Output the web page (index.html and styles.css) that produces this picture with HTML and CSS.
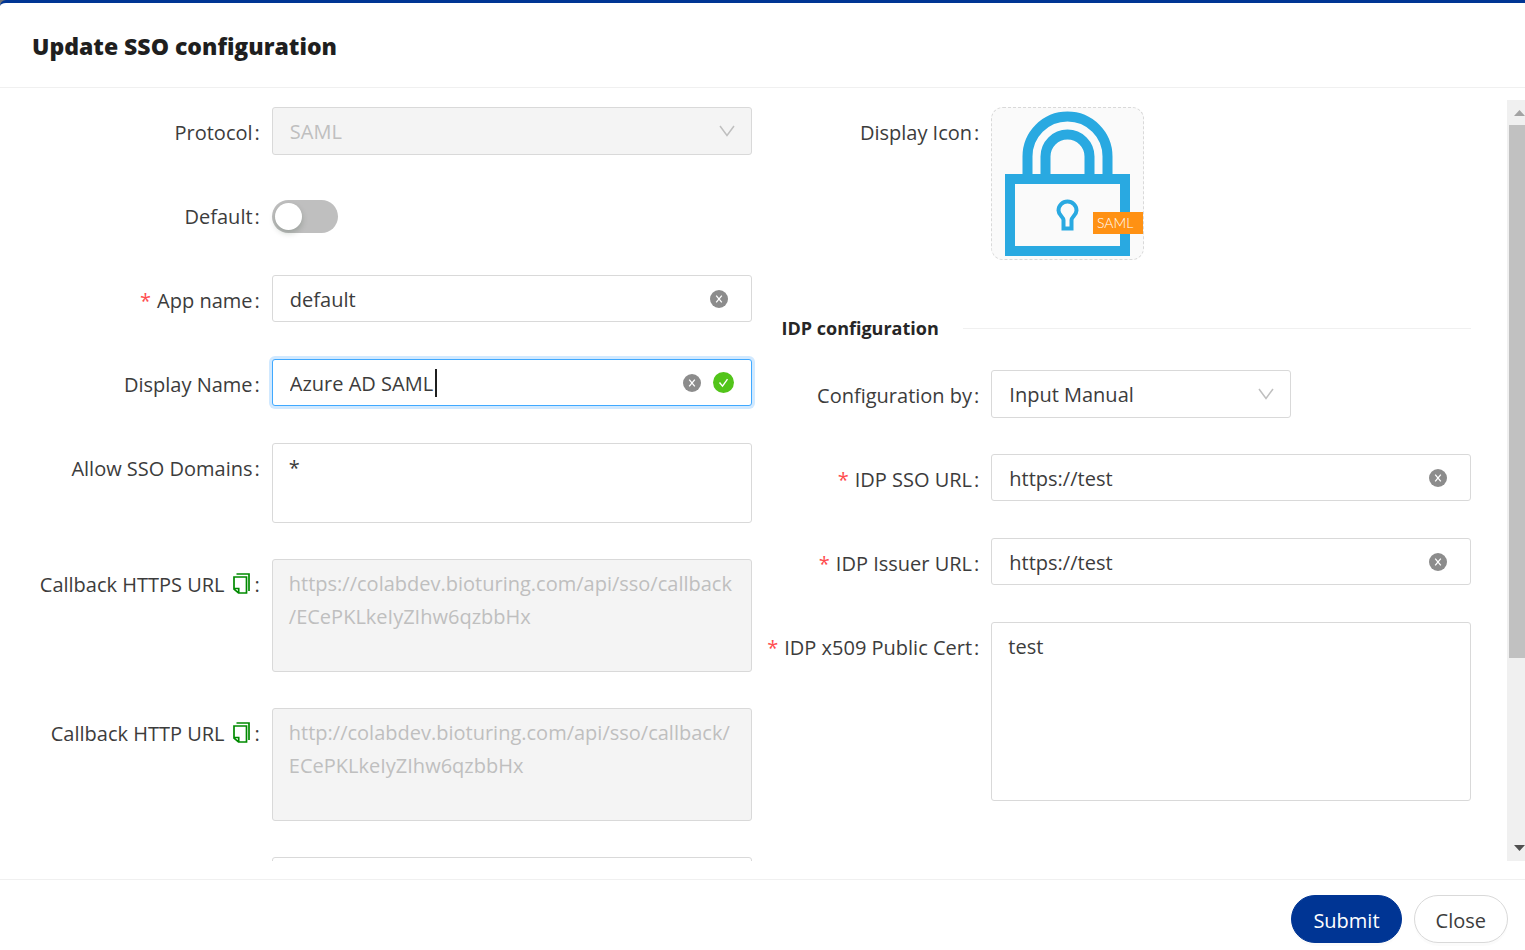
FILE: index.html
```html
<!DOCTYPE html>
<html lang="en">
<head>
<meta charset="utf-8">
<title>Update SSO configuration</title>
<link rel="stylesheet" href="styles.css">
</head>
<body>
<svg class="defs" aria-hidden="true">
  <symbol id="clear" viewBox="0 0 18 18"><circle cx="9" cy="9" r="9" fill="#8c8c8c"/><path d="M6.2 5.6l5.6 6.8M11.8 5.6l-5.6 6.8" stroke="#fff" stroke-width="1.3" fill="none"/></symbol>
  <symbol id="chevron" viewBox="0 0 16 12"><path d="M1 1l7 9.500 7-9.500" stroke="#bfbfbf" stroke-width="1.500" fill="none"/></symbol>
  <symbol id="copy" viewBox="0 0 18 22"><path d="M3.500 1H16v17M1 4h12.500v16H5.500L1 16.200zM1 15.500h4.700V20" stroke="#008a00" stroke-width="1.700" fill="none"/></symbol>
</svg>
<main class="modal">
  <header class="modal-header"><h1 class="title">Update SSO configuration</h1></header>
  <div class="modal-body">
    <form class="form" id="sso">
      <div class="column">
        <div class="row">
          <label class="label" for="protocol">Protocol<span class="colon">:</span></label>
          <div class="control">
            <select class="field select" id="protocol" disabled><option>SAML</option></select>
            <svg class="chevron"><use href="#chevron"/></svg>
          </div>
        </div>
        <div class="row">
          <label class="label" for="default">Default<span class="colon">:</span></label>
          <div class="control switch-box"><input class="switch" type="checkbox" role="switch" id="default"></div>
        </div>
        <div class="row">
          <label class="label" for="app"><span class="required">*</span>App name<span class="colon">:</span></label>
          <div class="control">
            <input class="field" id="app" type="text" value="default">
            <div class="suffix"><button class="icon-button" type="button" aria-label="Clear"><svg class="clear"><use href="#clear"/></svg></button></div>
          </div>
        </div>
        <div class="row">
          <label class="label" for="display">Display Name<span class="colon">:</span></label>
          <div class="control">
            <input class="field focused" id="display" type="text" value="Azure AD SAML">
            <span class="caret"></span>
            <div class="suffix suffix-valid">
              <button class="icon-button" type="button" aria-label="Clear"><svg class="clear"><use href="#clear"/></svg></button>
              <svg class="valid" viewBox="0 0 21 21"><circle cx="10.500" cy="10.500" r="10.500" fill="#52c41a"/><path d="M6.500 10.500l3 3.700 5-7" stroke="#fff" stroke-width="1.400" fill="none"/></svg>
            </div>
          </div>
        </div>
        <div class="row">
          <label class="label" for="domains">Allow SSO Domains<span class="colon">:</span></label>
          <div class="control"><textarea class="field area area-small" id="domains">*</textarea></div>
        </div>
        <div class="row">
          <div class="label"><label for="https">Callback HTTPS URL</label><button class="icon-button copy-button" type="button" aria-label="Copy"><svg class="copy"><use href="#copy"/></svg></button><span class="colon">:</span></div>
          <div class="control"><textarea class="field area area-medium" id="https" disabled>https://colabdev.bioturing.com/api/sso/callback
/ECePKLkeIyZIhw6qzbbHx</textarea></div>
        </div>
        <div class="row">
          <div class="label"><label for="http">Callback HTTP URL</label><button class="icon-button copy-button" type="button" aria-label="Copy"><svg class="copy"><use href="#copy"/></svg></button><span class="colon">:</span></div>
          <div class="control"><textarea class="field area area-medium" id="http" disabled>http://colabdev.bioturing.com/api/sso/callback/
ECePKLkeIyZIhw6qzbbHx</textarea></div>
        </div>
        <div class="row">
          <div class="label"></div>
          <div class="control"><textarea class="field area area-small" aria-label="Notes"></textarea></div>
        </div>
      </div>
      <div class="column">
        <div class="row">
          <div class="label">Display Icon<span class="colon">:</span></div>
          <div class="control">
            <button class="upload" type="button" aria-label="Display Icon">
              <svg class="lock" viewBox="0 0 151 151">
                <g fill="none" stroke="#29a9e1" stroke-width="10">
                  <path d="M35.500 68V48.500a40 40 0 0 1 80 0V68M53.500 68V48.500a22 22 0 0 1 44 0V68"/>
                  <path d="M18 71h115v72H18z"/>
                  <path d="M71.500 120.500v-8.500c0-3-5-5-5-9.500a9 9 0 0 1 18 0c0 4.500-5 6.500-5 9.500v8.500z" stroke-width="4"/>
                </g>
                <path d="M101 104h50v22h-50z" fill="#ff9113"/>
                <text class="lock-text" x="105" y="120">SAML</text>
              </svg>
            </button>
          </div>
        </div>
        <h2 class="divider">IDP configuration</h2>
        <div class="row">
          <label class="label" for="by">Configuration by<span class="colon">:</span></label>
          <div class="control control-short">
            <select class="field select" id="by"><option>Input Manual</option></select>
            <svg class="chevron"><use href="#chevron"/></svg>
          </div>
        </div>
        <div class="row">
          <label class="label" for="url"><span class="required">*</span>IDP SSO URL<span class="colon">:</span></label>
          <div class="control">
            <input class="field" id="url" type="text" value="https://test">
            <div class="suffix"><button class="icon-button" type="button" aria-label="Clear"><svg class="clear"><use href="#clear"/></svg></button></div>
          </div>
        </div>
        <div class="row">
          <label class="label" for="issuer"><span class="required">*</span>IDP Issuer URL<span class="colon">:</span></label>
          <div class="control">
            <input class="field" id="issuer" type="text" value="https://test">
            <div class="suffix"><button class="icon-button" type="button" aria-label="Clear"><svg class="clear"><use href="#clear"/></svg></button></div>
          </div>
        </div>
        <div class="row">
          <label class="label" for="cert"><span class="required">*</span>IDP x509 Public Cert<span class="colon">:</span></label>
          <div class="control"><textarea class="field area area-large" id="cert">test</textarea></div>
        </div>
      </div>
    </form>
    <div class="scrollbar" aria-hidden="true">
      <svg class="arrow" viewBox="0 0 25 25"><path d="M7 16l5.500-6 5.500 6z" fill="#a3a3a3"/></svg>
      <div class="track"><div class="thumb"></div></div>
      <svg class="arrow" viewBox="0 0 25 25"><path d="M7 9h11l-5.500 6z" fill="#505050"/></svg>
    </div>
  </div>
  <footer class="modal-footer">
    <button class="button primary" type="submit" form="sso">Submit</button>
    <button class="button" type="button">Close</button>
  </footer>
</main>
</body>
</html>
```
FILE: styles.css
```css
* { box-sizing: border-box; }
body { margin: 0; background: #6f7276; color: #3c3c3c; font: 400 20px/33px "Open Sans", "Noto Sans", sans-serif; }
.defs { position: absolute; width: 0; height: 0; }
.modal { display: flex; flex-direction: column; height: 100vh; border-top: 3px solid #003594; border-radius: 6px 0 0 0; background: #fff; overflow: hidden; }
.modal-header { padding: 27px 32px 24px; border-bottom: 1px solid #f0f0f0; }
.title { margin: 0; font-size: 23px; font-weight: 800; line-height: 33px; color: #1f1f1f; }
.modal-body { flex: 1; min-height: 0; display: flex; padding: 12px 0 18px 32px; }
.form { flex: 1; display: grid; grid-template-columns: 1fr 1fr; padding: 7px 36px 0 0; overflow: auto; scrollbar-width: none; }
.column { min-width: 0; }
.row { display: grid; grid-template-columns: 1fr 2fr; margin-bottom: 36px; min-height: 48px; }
.label { display: flex; justify-content: flex-end; align-items: center; height: 48px; padding: 3px 12px 0 0; white-space: nowrap; }
.colon { margin-left: 2px; }
.required { margin-right: 6px; color: #ff4d4f; }
.control { position: relative; min-width: 0; }
.control-short { width: 300px; }
.field { display: block; width: 100%; height: 47px; margin: 0; padding: 2px 17px 0; border: 1px solid #d9d9d9; border-radius: 3px; background: #fff; color: #3c3c3c; font: inherit; outline: none; }
.field:disabled { background: #f4f4f4; color: #bfbfbf; opacity: 1; }
.select { height: 48px; padding-top: 0; appearance: none; }
.focused { border-color: #40a9ff; box-shadow: 0 0 0 3px #d1e9ff; }
.area { padding: 7px 16px; resize: none; overflow: hidden; }
.area-small { height: 80px; }
.area-medium { height: 113px; }
.area-large { height: 179px; }
.chevron { position: absolute; top: 18px; right: 17px; width: 16px; height: 12px; pointer-events: none; }
.suffix { position: absolute; top: 0; right: 24px; height: 47px; display: flex; align-items: center; gap: 12px; }
.suffix-valid { right: 18px; }
.caret { position: absolute; left: 163px; top: 10px; width: 2px; height: 28px; background: #1f1f1f; }
.icon-button { display: flex; padding: 0; border: 0; background: none; cursor: pointer; }
.clear { width: 18px; height: 18px; }
.valid { width: 21px; height: 21px; }
.copy { width: 18px; height: 22px; }
.copy-button { margin: 0 2px 2px 8px; }
.switch-box { display: flex; align-items: center; height: 48px; padding-top: 3px; }
.switch { appearance: none; width: 66px; height: 33px; margin: 0; padding: 3px; border-radius: 17px; background: #bfbfbf; }
.switch::before { content: ""; display: block; width: 27px; height: 27px; border-radius: 50%; background: #fff; box-shadow: 0 3px 6px rgba(0, 35, 11, .2); }
.upload { display: block; width: 153px; height: 153px; padding: 0; border: 1px dashed #d9d9d9; border-radius: 12px; background: #fafafa; overflow: hidden; }
.lock { display: block; width: 151px; height: 151px; }
.lock-text { font: 300 14px Lato, sans-serif; fill: #fff; }
.divider { display: flex; align-items: center; gap: 24px; margin: 52px 0 25px 30px; color: #262626; font-size: 18px; font-weight: 700; line-height: 33px; }
.divider::after { content: ""; flex: 1; height: 1px; background: #f0f0f0; }
.scrollbar { width: 18px; display: flex; flex-direction: column; background: #f0f0f0; overflow: hidden; }
.arrow { flex: none; width: 25px; height: 25px; }
.track { flex: 1; padding-left: 2px; }
.thumb { height: 75%; background: #c1c1c1; }
.modal-footer { display: flex; justify-content: flex-end; gap: 12px; padding: 15px 17px 7px; border-top: 1px solid #f0f0f0; }
.button { height: 48px; padding: 3px 21px 0; border: 1px solid #d9d9d9; border-radius: 24px; background: #fff; color: #3c3c3c; font: inherit; line-height: 30px; box-shadow: 0 3px 0 rgba(0, 0, 0, .015); }
.primary { border-color: #003594; background: #003594; color: #fff; }
```
